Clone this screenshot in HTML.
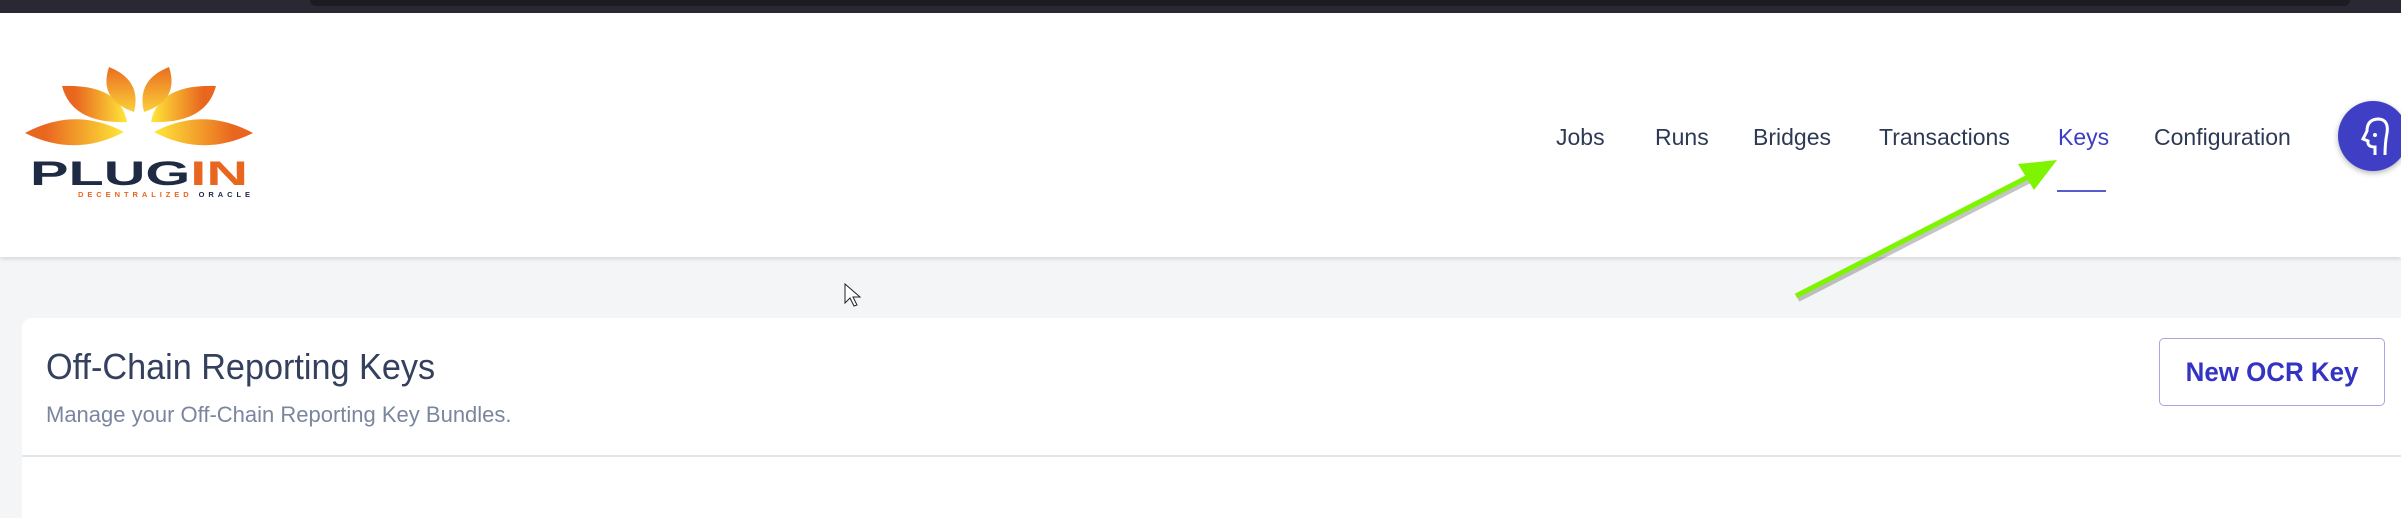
<!DOCTYPE html>
<html><head><meta charset="utf-8"><style>
*{margin:0;padding:0;box-sizing:border-box}
body{width:2401px;height:482px;overflow:hidden;background:#f4f5f7;font-family:"Liberation Sans",sans-serif;position:relative}
.top{position:absolute;left:0;top:0;width:2401px;height:13px;background:#2a2833}
.top .tab{position:absolute;left:310px;top:0;width:2040px;height:6px;background:#1c1b22;border-radius:0 0 6px 6px}
.header{position:absolute;left:0;top:13px;width:2401px;height:244px;background:#fff;box-shadow:0 2px 4px rgba(0,0,0,.12)}
.nav{position:absolute;top:111px;font-size:23px;color:#2e3a55}
.sq{display:inline-block;transform-origin:left;white-space:nowrap}
.card{position:absolute;left:22px;top:318px;width:2400px;height:200px;background:#fff;border-radius:10px 0 0 0}
</style></head><body>
<div class="top"><div class="tab"></div></div>
<div class="header">
 <div class="nav" style="left:1556px">Jobs</div>
 <div class="nav" style="left:1655px">Runs</div>
 <div class="nav" style="left:1753px">Bridges</div>
 <div class="nav" style="left:1879px">Transactions</div>
 <div class="nav" style="left:2058px;color:#3d3dc4">Keys</div>
 <div class="nav" style="left:2154px">Configuration</div>
 <div style="position:absolute;left:2057px;top:177px;width:49px;height:2px;background:#5b5bd0"></div>
 <div style="position:absolute;left:2338px;top:88px;width:70px;height:70px;border-radius:50%;background:#3f3fc6;box-shadow:0 2px 6px rgba(0,0,0,.3)"></div>
 <svg style="position:absolute;left:2355px;top:100px" width="40" height="50" viewBox="0 0 40 50"><path d="M20 42 L20 34 Q12 34 13 28 L8 26 L12 18 Q12 6 24 6 Q34 7 32 20 Q30 30 30 42" fill="none" stroke="#fff" stroke-width="3"/><circle cx="20" cy="22" r="2" fill="#fff"/></svg>
</div>
<svg style="position:absolute;left:0;top:0" width="270" height="210" viewBox="0 0 270 210">
  <defs>
   <linearGradient id="g1" x1="0" y1="0" x2="1" y2="0"><stop offset="0.2" stop-color="#e9661f"/><stop offset="1" stop-color="#ffe83a"/></linearGradient>
   <linearGradient id="g2" x1="1" y1="0" x2="0" y2="0"><stop offset="0.2" stop-color="#e9661f"/><stop offset="1" stop-color="#ffe83a"/></linearGradient>
   <linearGradient id="g3" x1="0" y1="0" x2="0" y2="1"><stop offset="0" stop-color="#ea6d20"/><stop offset="1" stop-color="#fbd03a"/></linearGradient>
  </defs>
  <path d="M25 133 Q75 106 124 132 Q75 158 25 133Z" fill="url(#g1)"/>
  <path d="M253 133 Q203 106 154 132 Q203 158 253 133Z" fill="url(#g2)"/>
  <path d="M62 86 Q120 84 127 122 Q72 124 62 86Z" fill="url(#g1)"/>
  <path d="M216 86 Q158 84 151 122 Q206 124 216 86Z" fill="url(#g2)"/>
  <path d="M109 67 Q142 80 134 112 Q98 100 109 67Z" fill="url(#g3)"/>
  <path d="M169 67 Q136 80 144 112 Q180 100 169 67Z" fill="url(#g3)"/>
  <text x="30" y="185" font-family="Liberation Sans" font-weight="bold" font-size="34" fill="#1f2a44" textLength="218" lengthAdjust="spacingAndGlyphs">PLUG<tspan fill="#e9661f">IN</tspan></text>
  <text x="78" y="197" font-family="Liberation Sans" font-weight="bold" font-size="7.5" fill="#e9661f" textLength="172" lengthAdjust="spacing">DECENTRALIZED <tspan fill="#1f2a44">ORACLE</tspan></text>
</svg>
<div class="card">
 <div style="position:absolute;left:24px;top:28px;font-size:36px;color:#34405e;transform:scaleX(.95)" class="sq">Off-Chain Reporting Keys</div>
 <div style="position:absolute;left:24px;top:84px;font-size:22px;color:#7a869e" class="sq">Manage your Off-Chain Reporting Key Bundles.</div>
 <div style="position:absolute;left:2137px;top:20px;width:226px;height:68px;border:1.5px solid #a7a7e6;border-radius:5px;color:#3333c4;font-size:27px;font-weight:bold;text-align:center;line-height:66px;white-space:nowrap"><span style="display:inline-block;transform:scaleX(.96)">New OCR Key</span></div>
 <div style="position:absolute;left:0;top:137px;width:2400px;height:2px;background:#e4e5e8"></div>
</div>
<svg style="position:absolute;left:0;top:0" width="2401" height="482">
 <line x1="1796" y1="296" x2="2030" y2="176" stroke="#555" stroke-opacity=".35" stroke-width="6" transform="translate(2,3)"/>
 <line x1="1796" y1="296" x2="2030" y2="176" stroke="#7ef400" stroke-width="5"/>
 <polygon points="2057,160 2018,164 2034,190" fill="#7ef400"/>
 <path d="M845 284 L845 303 L850 298 L854 306 L857 305 L853 297 L860 297 Z" fill="#fff" stroke="#222" stroke-width="1"/>
</svg>
</body></html>
